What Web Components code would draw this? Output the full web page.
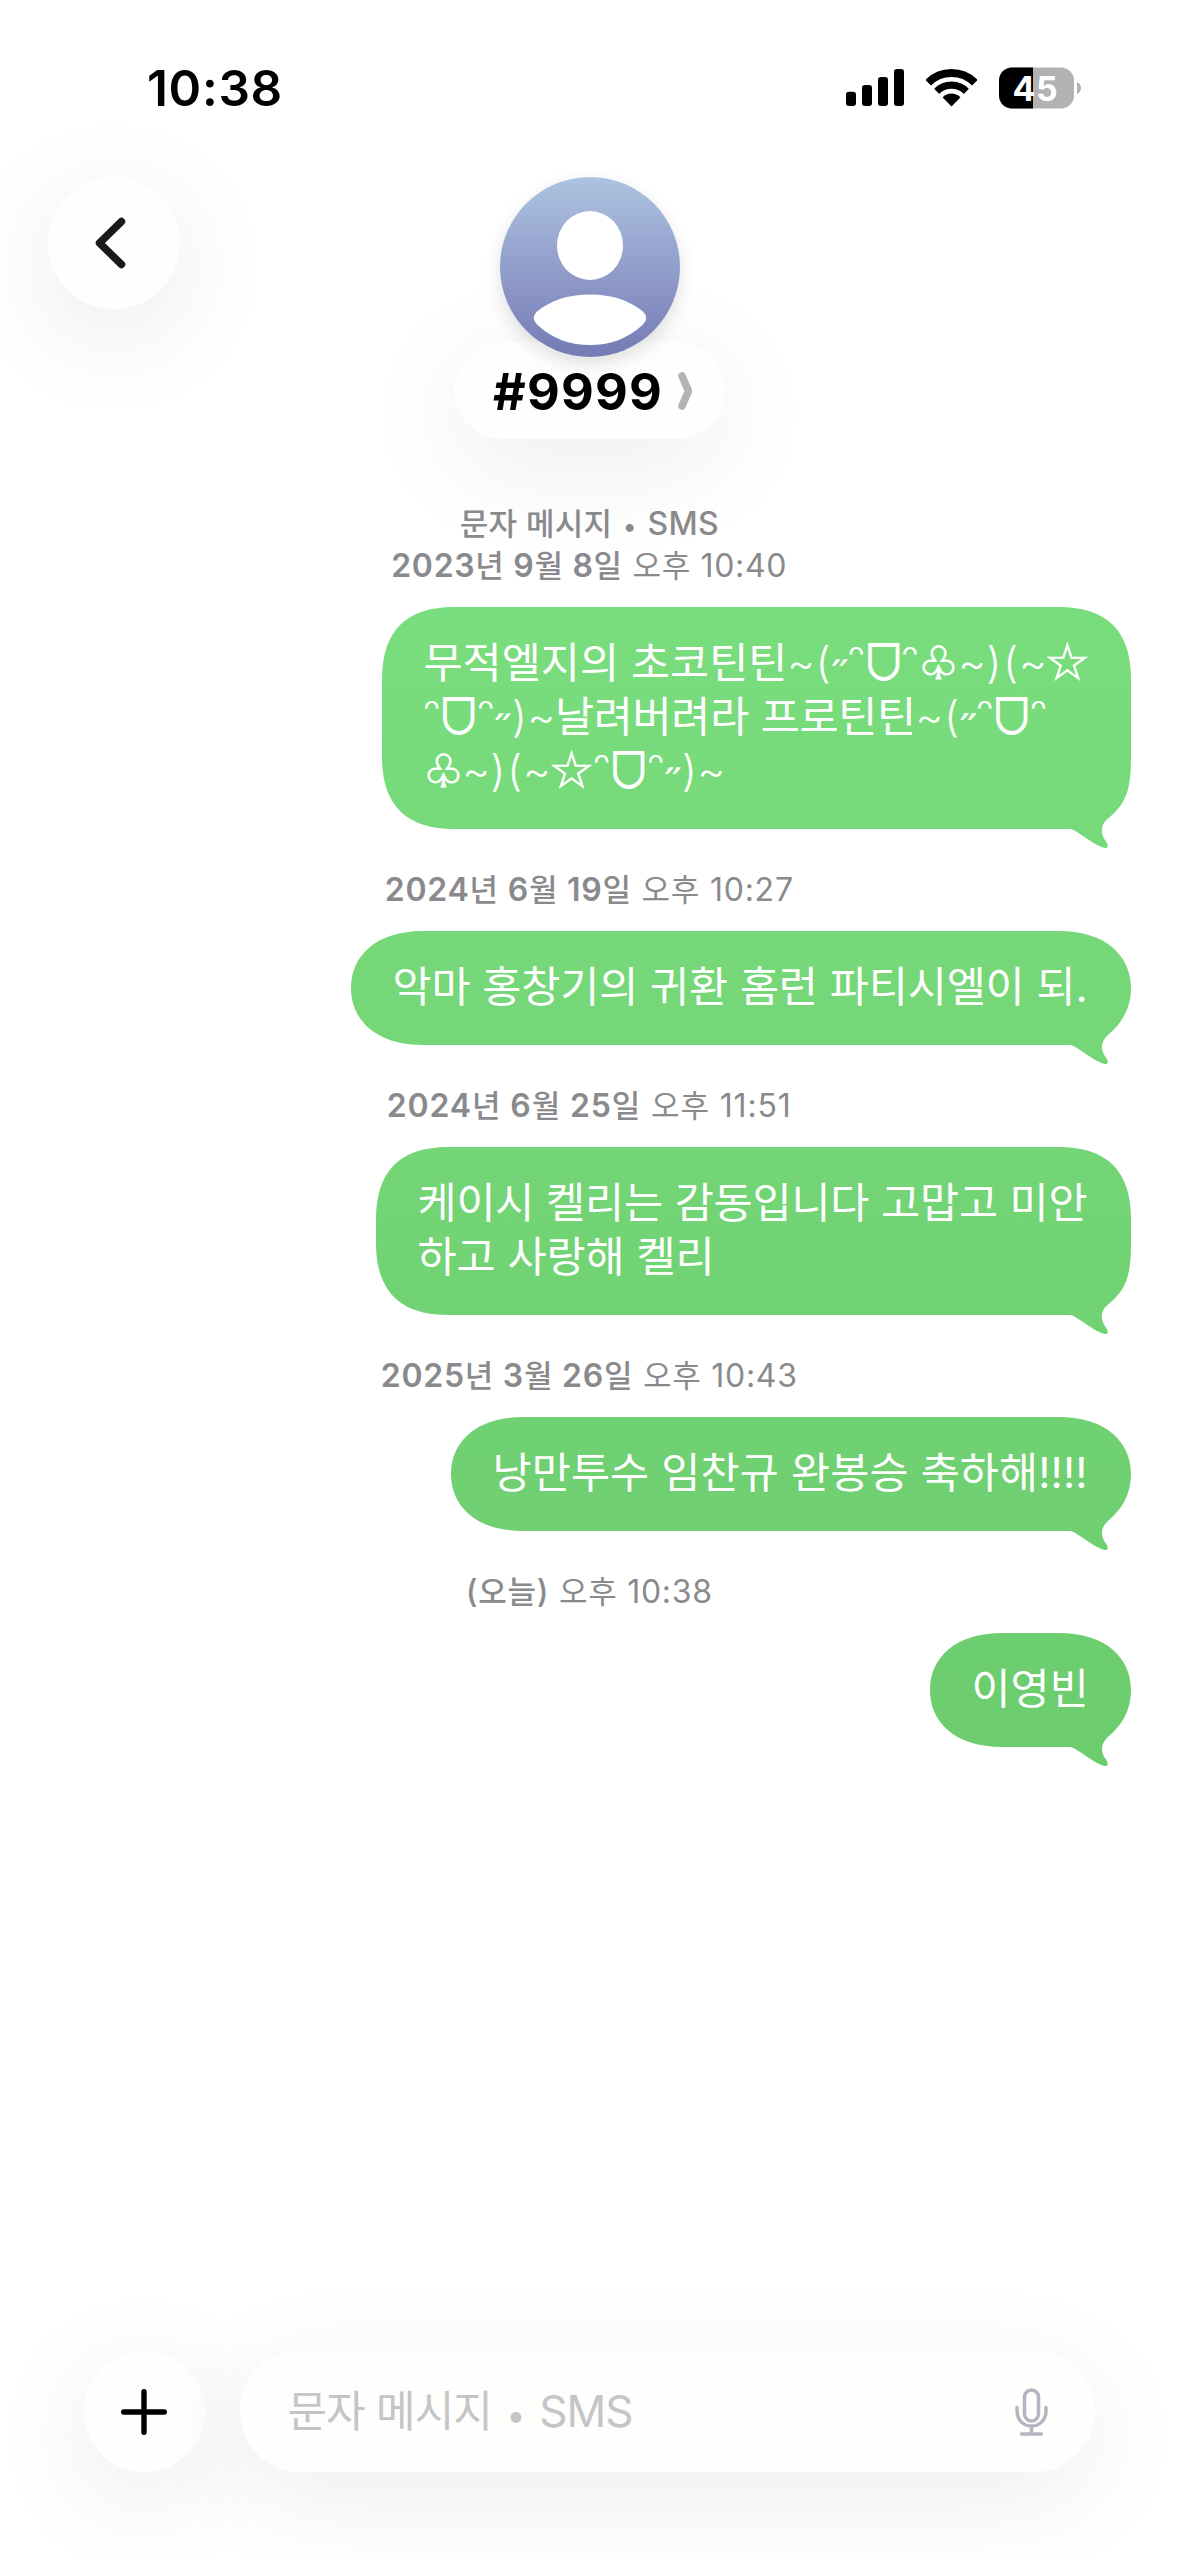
<!DOCTYPE html>
<html lang="ko">
<head>
<meta charset="utf-8">
<title>#9999</title>
<style>
html,body{margin:0;background:#fff}
body{width:1179px;height:2556px;overflow:hidden;font-family:Inter,"Noto Sans CJK KR",sans-serif;color:#000}
</style>
</head>
<body>
<message-app></message-app>
<script>
const define=(name,html,ready)=>customElements.define(name,class extends HTMLElement{
  connectedCallback(){
    if(this.shadowRoot)return;
    this.attachShadow({mode:'open'}).innerHTML=html;
    if(ready)ready.call(this,this.shadowRoot);
  }
});

/* One line of text, tracked so that it fills its measure. Hangul and symbols get their own optical size. */
const cells={'~':['tilde',27.3],'(':['paren',17],')':['paren',16.4],'˶':['tick',16.2],'ᵔ':['arc',17.8],'ᗜ':['mouth',36],'♧':['club',39],'☆':['star',43]};
define('fit-text',`<style>
:host{display:block;white-space:pre;width:max-content}
span.ko{font-size:var(--ko,1em);line-height:0}
.strong{font-weight:var(--strong,600)}
.ko.strong{font-weight:500}
.dot{font-size:.78em;line-height:0;padding:0 .09em}
.cell{display:inline-flex;justify-content:center;line-height:0;letter-spacing:0}
.mouth,.arc,.tick,.club,.star{font-family:"DejaVu Sans","Noto Sans",sans-serif}
.tilde,.paren{font-weight:350}
.mouth{transform:scale(1,1.22)}
.arc{transform:translateY(-2px) scale(1,1.12)}
.star{transform:translateY(-1px) scale(1.2);-webkit-text-stroke:.7px #fff}
.club{transform:scale(1.07);-webkit-text-stroke:1.1px #fff}
</style><span id="t"></span>`,function(root){
  const out=root.getElementById('t');
  const lead=this.getAttribute('strong');
  const add=(text,strong)=>{
    for(const run of text.match(/[가-힣]+|•|[^가-힣•]+/g)||[]){
      const s=document.createElement('span');
      s.className=(/[가-힣]/.test(run)?'ko':run==='•'?'dot':'')+(strong?' strong':'');
      if(this.hasAttribute('symbols')&&!/[가-힣]/.test(run)){
        for(const ch of run){
          if(!cells[ch]){s.append(ch);continue}
          const c=document.createElement('span');
          c.className='cell '+cells[ch][0];c.style.width=cells[ch][1]+'px';c.textContent=ch;s.append(c);
        }
      }else s.textContent=run;
      out.append(s);
    }
  };
  if(lead)add(lead,true);
  add(this.textContent,false);
  const want=+this.getAttribute('measure');
  if(want){
    const n=(lead||'').length+this.textContent.length;
    out.style.letterSpacing=(want-out.getBoundingClientRect().width)/n+'px';
  }
});

define('status-bar',`<style>
:host{display:flex;justify-content:space-between;align-items:center;height:60px;padding:58px 98px 0 147px}
fit-text{font-size:49.5px;font-weight:600;line-height:60px}
.icons{display:flex;align-items:center;height:60px}
svg{display:block}
.wifi{margin-left:22px}.battery{margin-left:22px}
</style>
<fit-text measure="136">10:38</fit-text>
<div class="icons">
<svg width="58" height="38" viewBox="0 0 58 38"><rect x="0" y="22.7" width="10" height="14.3" rx="3"/><rect x="16" y="16" width="10" height="21" rx="3"/><rect x="32" y="8" width="10" height="29" rx="3"/><rect x="48" y="0" width="10" height="37" rx="3"/></svg>
<svg class="wifi" width="51" height="38" viewBox="0 0 51 38"><defs><clipPath id="w"><path d="M25.5 37.4L-1.5 10 25.5-20 52.5 10Z"/></clipPath></defs><g clip-path="url(#w)"><circle cx="25.5" cy="37" r="33" fill="none" stroke="#000" stroke-width="8"/><circle cx="25.5" cy="37" r="20.8" fill="none" stroke="#000" stroke-width="7.2"/><circle cx="25.5" cy="37" r="12.4"/></g></svg>
<svg class="battery" width="82" height="42" viewBox="0 0 82 42"><defs><clipPath id="b"><rect y=".5" width="75" height="41" rx="13"/></clipPath></defs><g clip-path="url(#b)"><path fill="#b2b2b2" d="M0 0h75v42H0z"/><path d="M0 0h34v42H0z"/></g><path fill="#b2b2b2" d="M78 15q4 2 4 6t-4 6z"/><text x="36.5" y="33.5" text-anchor="middle" font-size="34" font-weight="650" letter-spacing=".6" fill="#fff">45</text></svg>
</div>`);

define('round-button',`<style>
:host{display:flex;flex:none;align-items:center;justify-content:center;width:var(--size);height:var(--size);border-radius:50%;background:#fefefd;box-shadow:0 24px 110px rgba(0,0,0,.09)}
</style><slot></slot>`);

define('contact-avatar',`<style>
:host{display:block;width:180px;height:180px;border-radius:50%;box-shadow:0 7px 18px rgba(0,0,0,.12)}
svg{display:block}
</style>
<svg width="180" height="180" viewBox="0 0 180 180"><defs><linearGradient id="g" x2="0" y2="1"><stop stop-color="#adc3e0"/><stop offset=".5" stop-color="#929ecb"/><stop offset="1" stop-color="#747bb5"/></linearGradient></defs><circle cx="90" cy="90" r="90" fill="url(#g)"/><ellipse cx="90" cy="68.5" rx="33" ry="34.5" fill="#fff"/><path fill="#fff" d="M90 117.5C113 117.5 130 124 143 134.500Q149.500 141 143 147.500C127 162.500 109 168 90 168S53 162.500 37 147.500Q30.500 141 37 134.500C50 124 67 117.500 90 117.500Z"/></svg>`);

define('contact-header',`<style>
:host{display:grid;grid-template-columns:1fr auto 1fr;align-items:start;padding:59px 48px 0 48px;height:262px}
round-button{--size:132px}
.who{display:flex;flex-direction:column;align-items:center}
contact-avatar{z-index:1;margin-bottom:-15px}
.pill{display:flex;align-items:center;box-sizing:border-box;width:271px;height:97px;padding:0 32px 0 39px;border-radius:49px;background:#fefefd;box-shadow:0 24px 110px rgba(0,0,0,.08);justify-content:space-between}
fit-text{font-size:50.5px;font-weight:700;line-height:97px;padding-top:2px}
svg{display:block}
</style>
<round-button><svg width="132" height="132" viewBox="0 0 132 132"><path d="M73.500 44.500L51.500 66 73.500 87.500" fill="none" stroke="#1a1a1a" stroke-width="7.500" stroke-linecap="round" stroke-linejoin="round"/></svg></round-button>
<div class="who"><contact-avatar></contact-avatar><div class="pill"><fit-text measure="170">#9999</fit-text><svg width="15" height="38" viewBox="0 0 15 38"><path d="M4 4L10.500 19 4 34" fill="none" stroke="#b3b3b3" stroke-width="7.500" stroke-linecap="round" stroke-linejoin="round"/></svg></div></div>`);

define('time-stamp',`<style>
:host{display:flex;flex-direction:column;align-items:center;padding:40.5px 0 19.5px;font-size:32px;line-height:42px;color:#8a8a8d;--ko:31px;--strong:560}
</style><slot></slot>`);

define('chat-bubble',`<style>
:host{display:block;position:relative;align-self:flex-end;box-sizing:border-box;padding:29px 42px 31px;color:#fff;font-size:42.5px;line-height:54px;z-index:0}
svg{position:absolute;left:0;top:0;z-index:-1;overflow:visible}
</style><div id="shape"></div><slot></slot>`,function(root){
  const w=+this.getAttribute('w'),h=+this.getAttribute('h'),k=h<120?57:72,c=h<120?25:24;
  this.style.width=w+'px';this.style.height=h+'px';
  const tone=y=>{const t=Math.max(0,Math.min(1,(y-607)/1140));return `rgb(${122-14*t},${221-17*t},${125-15*t})`};
  const top=+this.getAttribute('tone');
  const d=`M0 ${k}C0 ${c} ${c} 0 72 0H${w-72}C${w-c} 0 ${w} ${c} ${w} ${k}V${h-k}`+
    (h<120?`C${w} ${h-37} ${w-9} ${h-22} ${w-22} ${h-11}`:`C${w} ${h-38} ${w-5} ${h-25} ${w-24} ${h-9.5}`)+
    `C${w-30.5} ${h-4} ${w-31} ${h+5} ${w-25} ${h+12.5}C${w-22} ${h+17} ${w-23} ${h+19.5} ${w-26} ${h+19}C${w-37} ${h+17} ${w-55} ${h} ${w-61} ${h}H72C${c} ${h} 0 ${h-c} 0 ${h-k}Z`;
  root.getElementById('shape').innerHTML=`<svg width="${w}" height="${h}"><defs><linearGradient id="g" x2="0" y2="1"><stop stop-color="${tone(top)}"/><stop offset="1" stop-color="${tone(top+h)}"/></linearGradient></defs><path d="${d}" fill="url(#g)"/></svg>`;
});

define('message-list',`<style>
:host{display:flex;flex-direction:column;height:1768px;padding:64px 48.5px 0 48px;box-sizing:border-box}
time-stamp,chat-bubble{flex:none}
</style>
<time-stamp style="padding-top:0"><fit-text measure="259" style="--strong:500" strong="문자 메시지 • SMS"></fit-text><fit-text measure="396" strong="2023년 9월 8일"> 오후 10:40</fit-text></time-stamp>
<chat-bubble w="749" h="222" tone="607"><fit-text symbols>무적엘지의 초코틴틴~(˶ᵔᗜᵔ♧~)(~☆</fit-text><fit-text symbols style="letter-spacing:-.3px">ᵔᗜᵔ˶)~날려버려라 프로틴틴~(˶ᵔᗜᵔ</fit-text><fit-text symbols>♧~)(~☆ᵔᗜᵔ˶)~</fit-text></chat-bubble>
<time-stamp><fit-text measure="409" strong="2024년 6월 19일"> 오후 10:27</fit-text></time-stamp>
<chat-bubble w="780" h="114" tone="930"><fit-text measure="695">악마 홍창기의 귀환 홈런 파티시엘이 되.</fit-text></chat-bubble>
<time-stamp><fit-text measure="405" strong="2024년 6월 25일"> 오후 11:51</fit-text></time-stamp>
<chat-bubble w="755" h="168" tone="1146"><fit-text measure="670">케이시 켈리는 감동입니다 고맙고 미안</fit-text><fit-text measure="297">하고 사랑해 켈리</fit-text></chat-bubble>
<time-stamp><fit-text measure="417" strong="2025년 3월 26일"> 오후 10:43</fit-text></time-stamp>
<chat-bubble w="680" h="114" tone="1416"><fit-text measure="595">낭만투수 임찬규 완봉승 축하해!!!!</fit-text></chat-bubble>
<time-stamp><fit-text measure="247" style="--strong:500" strong="(오늘)"> 오후 10:38</fit-text></time-stamp>
<chat-bubble w="201" h="114" tone="1632"><fit-text>이영빈</fit-text></chat-bubble>`);

define('compose-bar',`<style>
:host{display:flex;align-items:center;gap:35px;padding:144px 84px 83px 83.500px}
round-button{--size:121px}
.field{display:flex;flex:1;align-items:center;justify-content:space-between;height:121px;box-sizing:border-box;padding:0 47px 0 48px;border-radius:61px;background:#fefefd;box-shadow:0 24px 110px rgba(0,0,0,.075);color:#c5c5c7}
fit-text{font-size:44px;line-height:121px;--ko:43px}
svg{display:block}
</style>
<round-button><svg width="46" height="46" viewBox="0 0 46 46"><path d="M23 2.700V43.300M2.700 23H43.300" fill="none" stroke="#000" stroke-width="5.400" stroke-linecap="round"/></svg></round-button>
<div class="field"><fit-text measure="345">문자 메시지 • SMS</fit-text><svg width="33" height="48" viewBox="0 0 33 48" fill="none" stroke="#b3b6c0" stroke-width="3.500" stroke-linecap="round"><rect x="9.500" y="2" width="14" height="31" rx="7"/><path d="M2 19.500V23C2 32 8.500 38 16.500 38S31 32 31 23V19.500M16.500 38V46M6.500 46H26.500"/></svg></div>`);

define('message-app',`<style>:host{display:flex;flex-direction:column;width:1179px;height:2556px;background:#fff}
message-list{position:relative;z-index:1}</style>
<status-bar></status-bar><contact-header></contact-header><message-list></message-list><compose-bar></compose-bar>`);
</script>
</body>
</html>
